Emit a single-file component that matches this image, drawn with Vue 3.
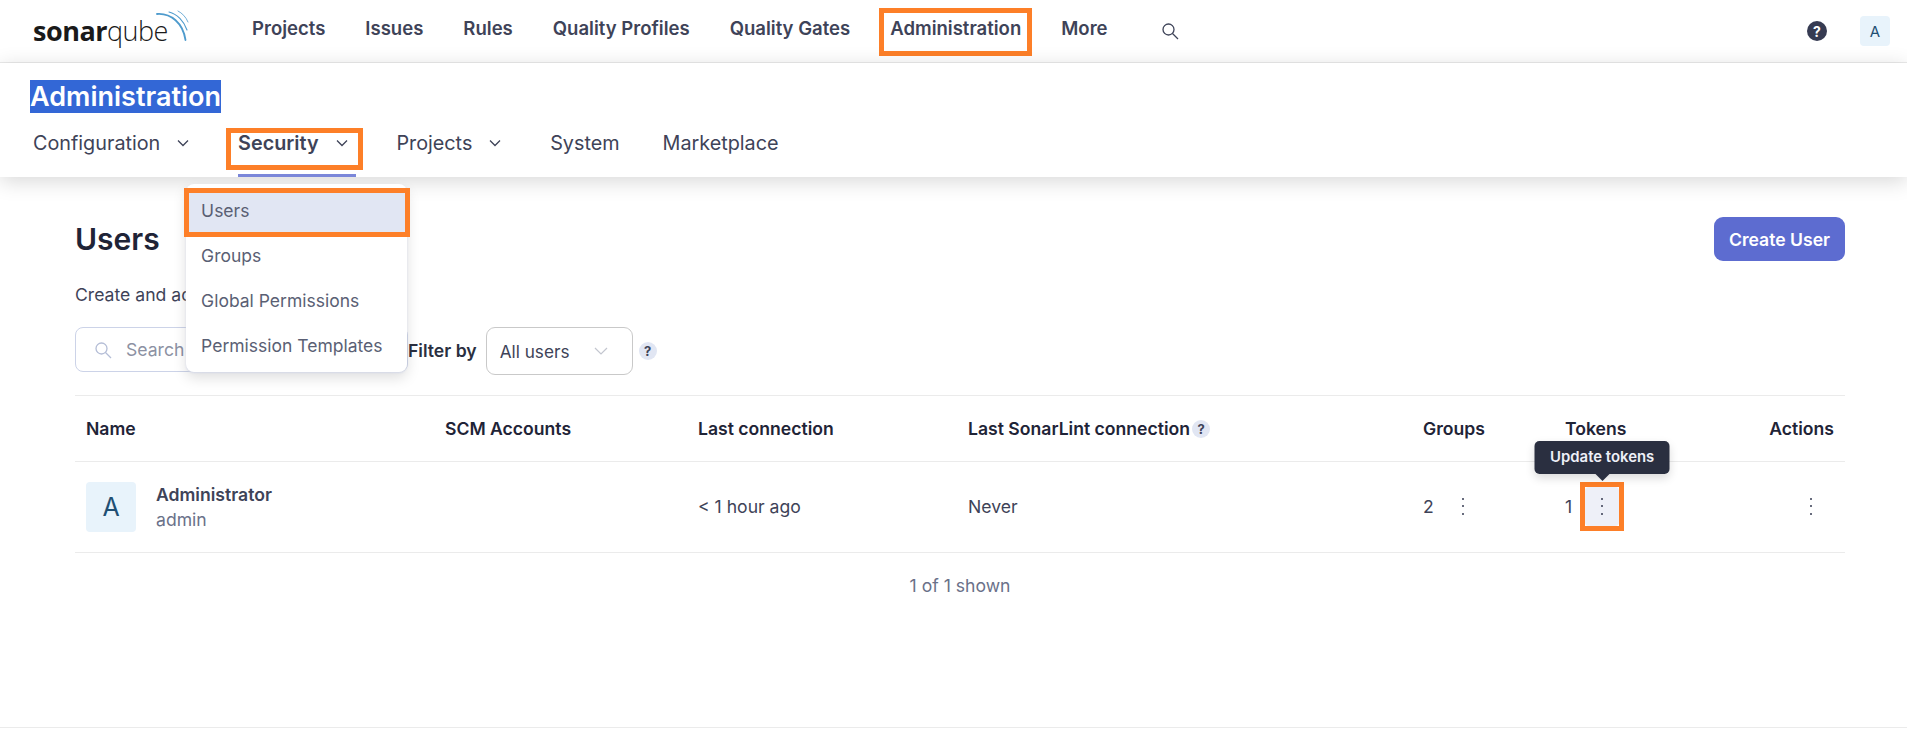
<script setup>
const topLinks = ['Projects', 'Issues', 'Rules', 'Quality Profiles', 'Quality Gates', 'Administration', 'More']
const subLinks = [
  { label: 'Configuration', menu: true },
  { label: 'Security', menu: true, active: true },
  { label: 'Projects', menu: true },
  { label: 'System' },
  { label: 'Marketplace' }
]
const menuItems = ['Users', 'Groups', 'Global Permissions', 'Permission Templates']
</script>

<template>
  <div class="page">
    <header class="topbar">
      <div class="logo">
        <span class="logo-sonar">sonar</span><span class="logo-qube">qube</span>
        <svg class="logo-waves" width="34" height="34" viewBox="0 0 34 34" fill="none" stroke="#4e9bcd" stroke-linecap="round">
          <path d="M2 5 C16 4 28 14 30.500 31" stroke-width="1.800" />
          <path d="M14 3 C22 5 29 12 32 21" stroke-width="1.100" />
          <path d="M23 2 C27 4 31 8 33 13" stroke-width="0.800" />
        </svg>
      </div>
      <nav class="top-nav">
        <a v-for="link in topLinks" :key="link" class="top-link">
          {{ link }}
          <span v-if="link === 'Administration'" class="mark mark-admin"></span>
        </a>
      </nav>
      <svg class="search-icon" width="18" height="18" viewBox="0 0 18 18" fill="none" stroke="#3e4358" stroke-width="1.300">
        <circle cx="7.500" cy="7.500" r="5.500" />
        <path d="M11.500 11.500 L17 17" />
      </svg>
      <div class="top-right">
        <span class="help-dark">?</span>
        <span class="avatar-small">A</span>
      </div>
    </header>

    <section class="admin-bar">
      <h1 class="admin-title"><span>Administration</span></h1>
      <nav class="sub-nav">
        <a v-for="link in subLinks" :key="link.label" class="sub-link" :class="{ active: link.active }">
          {{ link.label }}
          <svg v-if="link.menu" class="chevron" width="12" height="8" viewBox="0 0 12 8" fill="none" stroke="#3e4358" stroke-width="1.300">
            <path d="M1 1.500 L6 6.500 L11 1.500" />
          </svg>
          <template v-if="link.active">
            <span class="mark mark-security"></span>
            <span class="underline"></span>
            <ul class="dropdown">
              <li v-for="item in menuItems" :key="item" :class="{ selected: item === 'Users' }">
                {{ item }}
                <span v-if="item === 'Users'" class="mark mark-users"></span>
              </li>
            </ul>
          </template>
        </a>
      </nav>
    </section>

    <main class="content">
      <div class="heading-row">
        <h2>Users</h2>
        <button class="create-btn">Create User</button>
      </div>
      <p class="intro">Create and administer individual users.</p>

      <div class="filters">
        <div class="search-box">
          <svg width="18" height="18" viewBox="0 0 18 18" fill="none" stroke="#b4bdd6" stroke-width="1.300">
            <circle cx="7.500" cy="7.500" r="5.500" />
            <path d="M11.500 11.500 L17 17" />
          </svg>
          <span>Search by login or name...</span>
        </div>
        <label class="filter-label">Filter by</label>
        <div class="select-box">
          <span>All users</span>
          <svg width="14" height="8" viewBox="0 0 14 8" fill="none" stroke="#c3c6cf" stroke-width="1.200">
            <path d="M1 1 L7 7 L13 1" />
          </svg>
        </div>
        <span class="help-light help-filter">?</span>
      </div>

      <table class="users">
        <colgroup>
          <col style="width: 359px" />
          <col style="width: 253px" />
          <col style="width: 270px" />
          <col style="width: 455px" />
          <col style="width: 142px" />
          <col style="width: 150px" />
          <col style="width: 141px" />
        </colgroup>
        <thead>
          <tr>
            <th>Name</th>
            <th>SCM Accounts</th>
            <th>Last connection</th>
            <th>Last SonarLint connection<span class="help-light help-th">?</span></th>
            <th>Groups</th>
            <th>Tokens</th>
            <th class="right">Actions</th>
          </tr>
        </thead>
        <tbody>
          <tr>
            <td>
              <div class="user-cell">
                <span class="avatar">A</span>
                <div class="user-text">
                  <div class="user-name">Administrator</div>
                  <div class="user-login">admin</div>
                </div>
              </div>
            </td>
            <td></td>
            <td>&lt; 1 hour ago</td>
            <td>Never</td>
            <td>
              <div class="count-cell">
                <span>2</span>
                <span class="dots-btn"><i></i><i></i><i></i></span>
              </div>
            </td>
            <td>
              <div class="count-cell tokens-cell">
                <span>1</span>
                <span class="dots-btn hovered">
                  <i></i><i></i><i></i>
                  <span class="mark mark-tokens"></span>
                  <span class="tooltip">Update tokens</span>
                </span>
              </div>
            </td>
            <td>
              <div class="count-cell actions-cell">
                <span class="dots-btn"><i></i><i></i><i></i></span>
              </div>
            </td>
          </tr>
        </tbody>
      </table>

      <p class="shown">1 of 1 shown</p>
    </main>

    <footer class="footer"></footer>
  </div>
</template>

<style>
html,
body {
  margin: 0;
  background: #fff;
  overflow: hidden;
}
</style>

<style scoped>
.page {
  height: 748px;
  font-family: Inter, "Liberation Sans", sans-serif;
  color: #3e4358;
  display: flex;
  flex-direction: column;
}
.mark {
  position: absolute;
  border: 5px solid #fd7f28;
  box-sizing: border-box;
  pointer-events: none;
}

/* top bar */
.topbar {
  height: 62px;
  flex: none;
  border-bottom: 1px solid #ebebeb;
  display: flex;
  align-items: center;
  padding: 0 17px 0 33px;
}
.logo {
  position: relative;
  width: 219px;
  height: 62px;
  flex: none;
  font-family: "Open Sans", sans-serif;
  color: #1a1a1a;
  font-size: 27px;
  line-height: 62px;
  letter-spacing: -0.5px;
}
.logo-sonar {
  font-weight: 700;
}
.logo-qube {
  font-weight: 300;
}
.logo-waves {
  position: absolute;
  left: 122px;
  top: 9px;
}
.top-nav {
  display: flex;
  gap: 40px;
  margin-bottom: 6px;
}
.top-link {
  position: relative;
  font-size: 18.550px;
  font-weight: 600;
  white-space: nowrap;
}
.mark-admin {
  left: -11px;
  right: -11px;
  top: -9px;
  height: 48px;
}
.search-icon {
  margin-left: 53px;
  margin-bottom: 1px;
}
.top-right {
  margin-left: auto;
  display: flex;
  align-items: center;
  gap: 33px;
}
.help-dark {
  width: 20px;
  height: 20px;
  border-radius: 50%;
  background: #363b52;
  color: #fff;
  font-size: 14px;
  font-weight: 700;
  display: flex;
  align-items: center;
  justify-content: center;
}
.avatar-small {
  width: 30px;
  height: 30px;
  border-radius: 4px;
  background: #e8f3fb;
  color: #1f4f73;
  font-size: 15px;
  display: flex;
  align-items: center;
  justify-content: center;
}

/* admin bar */
.admin-bar {
  height: 114px;
  flex: none;
  box-sizing: border-box;
  padding: 20px 0 0 30px;
  background: #fff;
  box-shadow: 0 4px 20px rgba(0, 0, 0, 0.16);
  position: relative;
  z-index: 2;
}
.admin-title {
  margin: 0;
  font-size: 27px;
  font-weight: 600;
  line-height: 28px;
}
.admin-title span {
  background: #3367d6;
  color: #fff;
}
.sub-nav {
  display: flex;
  margin: 18px 0 0 3px;
  gap: 43px;
}
.sub-link {
  position: relative;
  font-size: 19.800px;
  line-height: 28px;
  color: #3e4358;
  white-space: nowrap;
  display: flex;
  align-items: center;
}
.sub-link.active {
  font-weight: 600;
}
.chevron {
  margin-left: 17px;
  margin-right: 5.800px;
}
.mark-security {
  left: -12px;
  right: -10px;
  top: -1px;
  height: 42px;
}
.underline {
  position: absolute;
  left: 0;
  right: -3px;
  top: 45px;
  height: 3px;
  background: #7b87d9;
}
.dropdown {
  position: absolute;
  left: -52px;
  top: 55px;
  width: 221px;
  box-sizing: border-box;
  margin: 0;
  padding: 4px 0;
  list-style: none;
  background: #fff;
  border-radius: 8px;
  box-shadow: 0 1px 2px #d5d9e8, 0 6px 14px rgba(0, 0, 0, 0.13);
  font-size: 17.500px;
  font-weight: 400;
  color: #5a5f74;
}
.dropdown li {
  position: relative;
  height: 45px;
  line-height: 45px;
  padding-left: 15px;
}
.dropdown li.selected {
  background: #e1e6f3;
}
.mark-users {
  left: -2px;
  right: -3px;
  top: 0;
  bottom: -4px;
}

/* content */
.content {
  flex: 1;
  padding: 0 62px 0 75px;
}
.heading-row {
  display: flex;
  justify-content: space-between;
  align-items: center;
  padding-top: 41px;
  height: 44px;
}
.heading-row h2 {
  margin: 0 0 2px;
  font-size: 30px;
  font-weight: 600;
  color: #1f2437;
}
.create-btn {
  width: 131px;
  height: 44px;
  margin-bottom: 2px;
  border: 0;
  border-radius: 9px;
  background: #5d6cd0;
  color: #fff;
  font-family: inherit;
  font-size: 17.600px;
  font-weight: 600;
}
.intro {
  margin: 21px 0 0;
  font-size: 17.600px;
  line-height: 24px;
  color: #3e4358;
}
.filters {
  display: flex;
  align-items: flex-start;
  margin-top: 20px;
  height: 48px;
}
.search-box {
  width: 333px;
  height: 45px;
  box-sizing: border-box;
  border: 1px solid #ccd3e8;
  border-radius: 8px;
  display: flex;
  align-items: center;
  gap: 14px;
  padding-left: 18px;
  font-size: 17.600px;
  color: #8c91a3;
  white-space: nowrap;
  overflow: hidden;
  flex: none;
}
.filter-label {
  font-size: 17.600px;
  font-weight: 600;
  color: #2a2f40;
  line-height: 48px;
  margin-right: 9px;
}
.select-box {
  width: 147px;
  height: 48px;
  box-sizing: border-box;
  border: 1px solid #c9c9c9;
  border-radius: 9px;
  display: flex;
  align-items: center;
  justify-content: space-between;
  padding: 0 24px 0 13px;
  font-size: 17.200px;
}
.help-light {
  width: 18px;
  height: 18px;
  border-radius: 50%;
  background: #e1e6f3;
  color: #3e4358;
  font-size: 13px;
  font-weight: 700;
  display: inline-flex;
  align-items: center;
  justify-content: center;
}
.help-filter {
  margin: 15px 0 0 6px;
}
.help-th {
  margin-left: 2px;
  vertical-align: 1px;
}
.users {
  width: 1770px;
  margin-top: 20px;
  table-layout: fixed;
  border-collapse: collapse;
  border-top: 1px solid #ebebeb;
}
.users th {
  height: 65px;
  padding: 0 11px;
  text-align: left;
  font-size: 17.600px;
  font-weight: 600;
  color: #1f2437;
  border-bottom: 1px solid #ebebeb;
}
.users th.right {
  text-align: right;
}
.users td {
  height: 88px;
  padding: 0 11px 2px;
  font-size: 17.600px;
  color: #3e4358;
  border-bottom: 1px solid #ebebeb;
}
.user-cell {
  display: flex;
  align-items: center;
  gap: 20px;
  padding-top: 2px;
}
.user-text {
  padding-top: 1px;
}
.avatar {
  width: 50px;
  height: 50px;
  border-radius: 4px;
  background: #e8f3fb;
  color: #1f4f73;
  font-size: 25px;
  display: flex;
  align-items: center;
  justify-content: center;
}
.user-name {
  font-weight: 600;
  line-height: 24px;
}
.user-login {
  color: #6a7189;
  line-height: 26px;
}
.count-cell {
  display: flex;
  align-items: center;
  gap: 12px;
}
.tokens-cell {
  gap: 13px;
}
.actions-cell {
  justify-content: flex-end;
  padding-right: 6px;
}
.dots-btn {
  position: relative;
  width: 34px;
  height: 39px;
  border-radius: 4px;
  display: flex;
  flex-direction: column;
  align-items: center;
  justify-content: center;
  gap: 5.500px;
}
.dots-btn i {
  width: 2px;
  height: 2px;
  border-radius: 50%;
  background: #363b52;
}
.hovered {
  background: #eef0f8;
}
.mark-tokens {
  left: -5px;
  right: -5px;
  top: -5px;
  bottom: -5px;
}
.tooltip {
  position: absolute;
  left: 50%;
  bottom: 52px;
  transform: translateX(-50%);
  width: 135px;
  height: 33px;
  line-height: 33px;
  text-align: center;
  border-radius: 5px;
  background: #2a2f40;
  color: #eef0f8;
  font-size: 14.900px;
  font-weight: 600;
  box-shadow: 0 4px 10px rgba(0, 0, 0, 0.15);
}
.tooltip::after {
  content: "";
  position: absolute;
  left: 50%;
  top: 100%;
  margin-left: -7px;
  border: 7px solid transparent;
  border-top-color: #2a2f40;
  border-bottom: 0;
}
.shown {
  margin: 21px 0 0;
  text-align: center;
  font-size: 17.600px;
  line-height: 24px;
  color: #6a7189;
}
.footer {
  height: 20px;
  flex: none;
  border-top: 1px solid #ebebeb;
}
</style>
